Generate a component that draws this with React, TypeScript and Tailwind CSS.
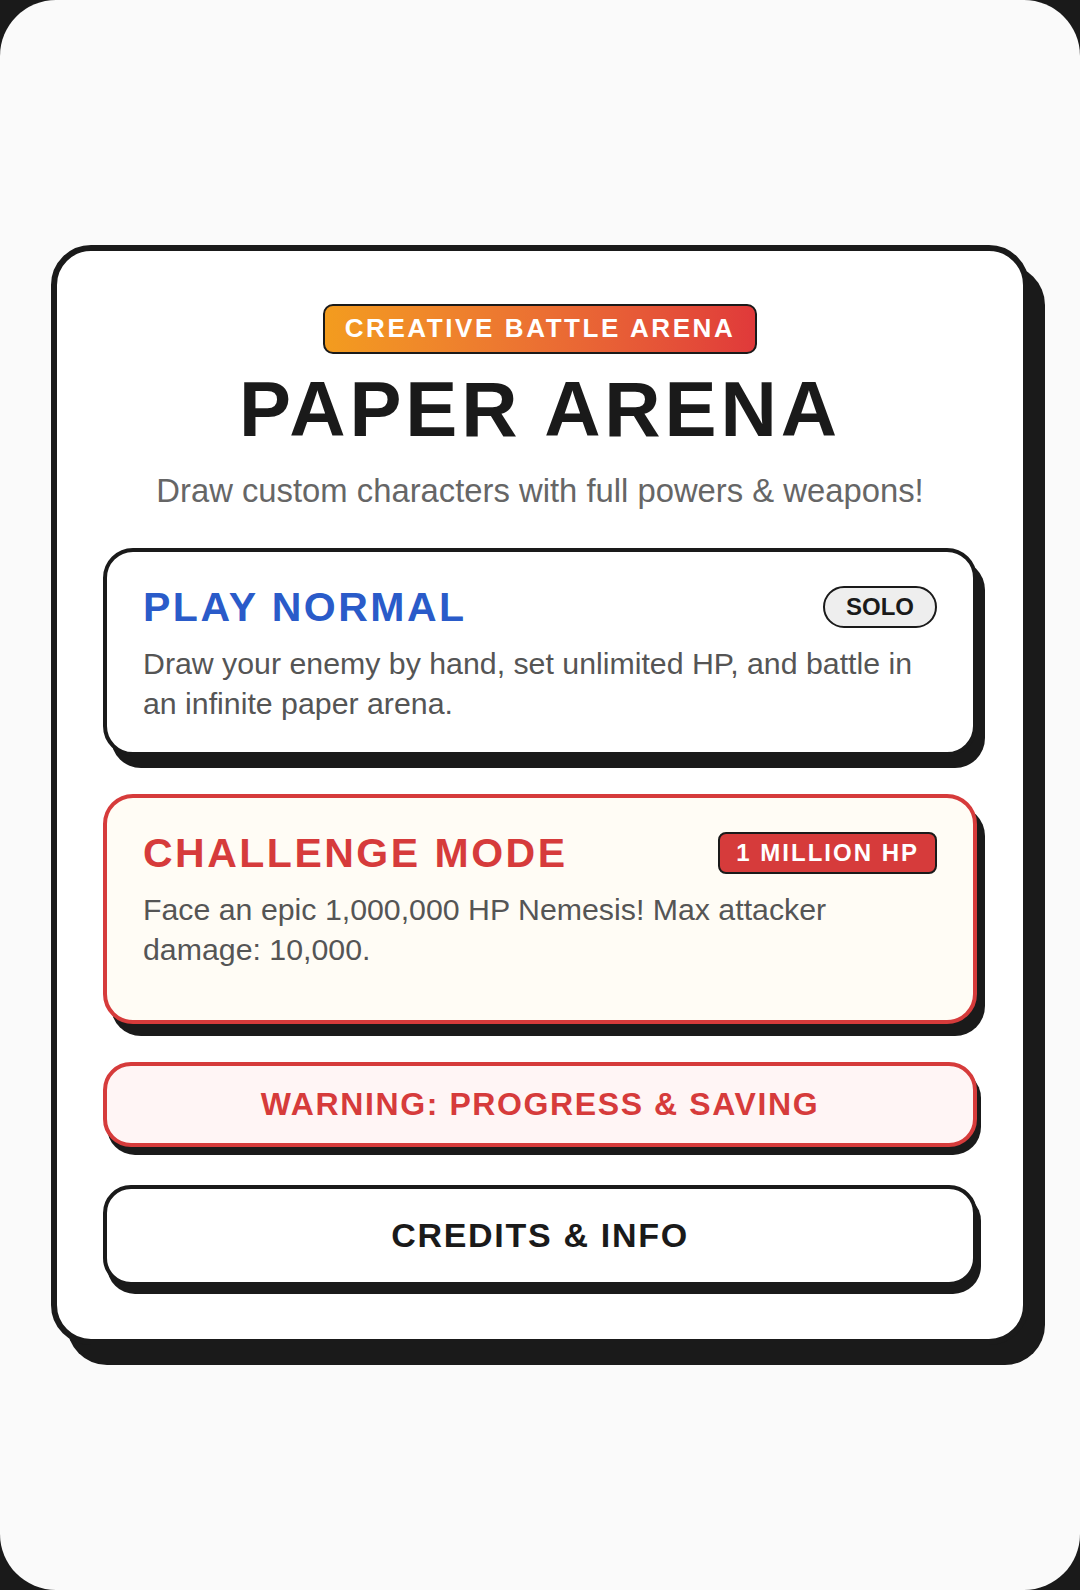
import React from 'react'

const font = { fontFamily: '"Liberation Sans", Arial, sans-serif' }

type ModeCardProps = {
  title: string
  titleColor: string
  badge: React.ReactNode
  desc: string
  className: string
}

const ModeCard = ({ title, titleColor, badge, desc, className }: ModeCardProps) => (
  <button className={`w-full text-left rounded-[30px] border-[4px] px-[36px] pt-[31px] ${className}`}>
    <div className="flex items-center justify-between h-[48px]">
      <span className={`text-[41px] leading-[1.2] font-bold tracking-[2.5px] ${titleColor}`}>{title}</span>
      {badge}
    </div>
    <p className="mt-[13px] text-[30.3px] leading-[40px] text-[#555]">{desc}</p>
  </button>
)

export default function App() {
  return (
    <div className="bg-[#1a1a1a] w-full" style={font}>
      <div className="bg-[#fafafa] rounded-[56px] min-h-[1590px] flex items-center justify-center">
        <div className="w-[978px] bg-white border-[6px] border-[#1a1a1a] rounded-[40px] shadow-[16px_20px_0_#1a1a1a] px-[46px] py-[53px] flex flex-col items-center">
          <div className="rounded-[10px] border-2 border-[#1a1a1a] bg-linear-to-r from-[#f39c1e] to-[#e0393a] px-5 py-[8px] text-white font-bold text-[26px] leading-[1.15] tracking-[2.6px]">
            CREATIVE BATTLE ARENA
          </div>
          <h1 className="mt-[16px] text-[78px] leading-none font-bold tracking-[0.05em] text-[#1a1a1a]">PAPER ARENA</h1>
          <p className="mt-[18px] text-[32.8px] leading-[1.5] text-[#666]">
            Draw custom characters with full powers &amp; weapons!
          </p>

          <div className="mt-[33px] w-full flex flex-col gap-[38px]">
            <ModeCard
              title="PLAY NORMAL"
              titleColor="text-[#2a5bc9]"
              className="bg-white border-[#1a1a1a] shadow-[8px_12px_0_#1a1a1a] pb-[28px]"
              badge={
                <span className="rounded-full border-2 border-[#1a1a1a] bg-[#eeeeee] px-[21px] py-[5px] text-[24px] leading-[1.15] font-bold text-[#1a1a1a]">
                  SOLO
                </span>
              }
              desc="Draw your enemy by hand, set unlimited HP, and battle in an infinite paper arena."
            />
            <ModeCard
              title="CHALLENGE MODE"
              titleColor="text-[#d63b3b]"
              className="bg-[#fffcf5] border-[#d63b3b] shadow-[8px_12px_0_#1a1a1a] pb-[50px]"
              badge={
                <span className="rounded-[8px] border-2 border-[#1a1a1a] bg-[#d63b3b] px-4 py-[5px] text-[24px] leading-[1.15] font-bold tracking-[2px] text-white">
                  1 MILLION HP
                </span>
              }
              desc="Face an epic 1,000,000 HP Nemesis! Max attacker damage: 10,000."
            />
            <button className="w-full rounded-[28px] border-[4px] border-[#d63b3b] bg-[#fff5f5] shadow-[4px_8px_0_#1a1a1a] py-[20px] text-[32px] leading-[1.15] font-bold tracking-[0.05em] text-[#d63b3b]">
              WARNING: PROGRESS &amp; SAVING
            </button>
            <button className="w-full rounded-[28px] border-[4px] border-[#1a1a1a] bg-white shadow-[4px_8px_0_#1a1a1a] py-[27px] text-[34px] leading-[1.15] font-bold tracking-[0.05em] text-[#1a1a1a]">
              CREDITS &amp; INFO
            </button>
          </div>
        </div>
      </div>
    </div>
  )
}
